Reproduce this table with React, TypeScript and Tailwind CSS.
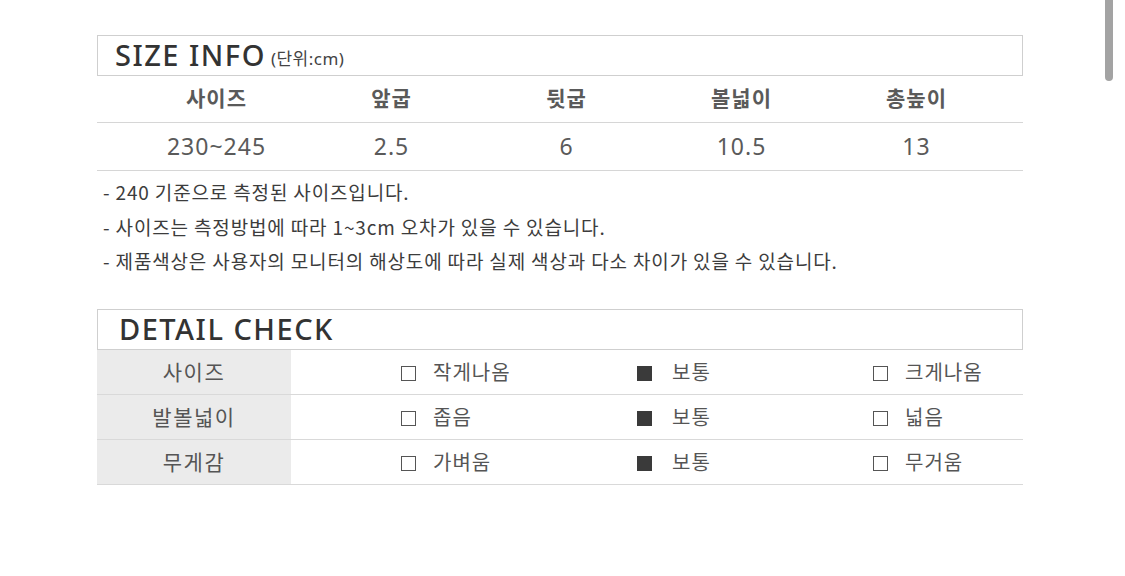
const KR = 'font-["Noto_Sans","Noto_Sans_CJK_KR",sans-serif]'

const SIZE_HEAD = ['사이즈', '앞굽', '뒷굽', '볼넓이', '총높이']
const SIZE_VALS = ['230~245', '2.5', '6', '10.5', '13']

const NOTES = [
  '- 240 기준으로 측정된 사이즈입니다.',
  '- 사이즈는 측정방법에 따라 1~3cm 오차가 있을 수 있습니다.',
  '- 제품색상은 사용자의 모니터의 해상도에 따라 실제 색상과 다소 차이가 있을 수 있습니다.',
]

const CHECKS: { label: string; opts: string[] }[] = [
  { label: '사이즈', opts: ['작게나옴', '보통', '크게나옴'] },
  { label: '발볼넓이', opts: ['좁음', '보통', '넓음'] },
  { label: '무게감', opts: ['가벼움', '보통', '무거움'] },
]

function Box({ on }: { on: boolean }) {
  return on
    ? <span className="w-[15px] h-[15px] bg-[#3a3a3a] inline-block" />
    : <span className="w-[15px] h-[15px] border-[1.5px] border-[#555] inline-block" />
}

export default function App() {
  return (
    <div className={`relative w-[1125px] h-[576px] bg-white overflow-hidden ${KR}`}>
      {/* overlay scrollbar */}
      <div className="absolute left-[1105px] top-0 w-[8px] h-[81px] rounded-b-full bg-[#a3a3a3]" />

      <div className="ml-[97px] w-[926px] pt-[35px]">
        {/* SIZE INFO */}
        <div className="h-[41px] border border-[#cfcfcf] flex items-end pl-[17px] pb-[6px]">
          <span className="font-medium text-[29px] leading-none text-[#333] tracking-[1.5px]">SIZE INFO</span>
          <span className="ml-[5px] mb-[2px] text-[17px] leading-none text-[#444] tracking-[0.5px]">(단위:cm)</span>
        </div>

        <div className="grid grid-cols-[repeat(5,175px)] pl-[32px] h-[47px] items-center border-b border-[#d6d6d6]">
          {SIZE_HEAD.map((h) => (
            <div key={h} className="text-center text-[21px] font-bold text-[#5a5a5a] tracking-[1px]">{h}</div>
          ))}
        </div>
        <div className="grid grid-cols-[repeat(5,175px)] pl-[32px] h-[48px] items-center border-b border-[#d6d6d6]">
          {SIZE_VALS.map((v) => (
            <div key={v} className="text-center text-[23px] text-[#5a5a5a] tracking-[1px]">{v}</div>
          ))}
        </div>

        {/* notes */}
        <div className="mt-[4px] pl-[6px]">
          {NOTES.map((n) => (
            <p key={n} className="text-[19px] leading-[34.5px] text-[#3c3c3c] tracking-[0.85px] font-['Noto_Sans_CJK_KR',sans-serif]">{n}</p>
          ))}
        </div>

        {/* DETAIL CHECK */}
        <div className="mt-[30px] h-[41px] border border-[#cfcfcf] flex items-end pl-[21px] pb-[6px]">
          <span className="font-medium text-[29px] leading-none text-[#333] tracking-[1.5px]">DETAIL CHECK</span>
        </div>

        {CHECKS.map((row) => (
          <div key={row.label} className="flex h-[45px] border-b border-[#d9d9d9]">
            <div className="w-[194px] bg-[#ebebeb] flex items-center justify-center pt-[3px] text-[21px] text-[#555] tracking-[1.5px]">
              {row.label}
            </div>
            <div className="flex-1 flex items-center pt-[3px] pl-[110px]">
              {row.opts.map((o, i) => (
                <div key={o + i} className={`flex items-center ${i < 2 ? 'w-[236px]' : ''}`}>
                  <Box on={i === 1} />
                  <span className={`${i === 1 ? 'ml-[20px]' : 'ml-[17px]'} text-[20px] text-[#555] tracking-[1px]`}>{o}</span>
                </div>
              ))}
            </div>
          </div>
        ))}
      </div>
    </div>
  )
}
